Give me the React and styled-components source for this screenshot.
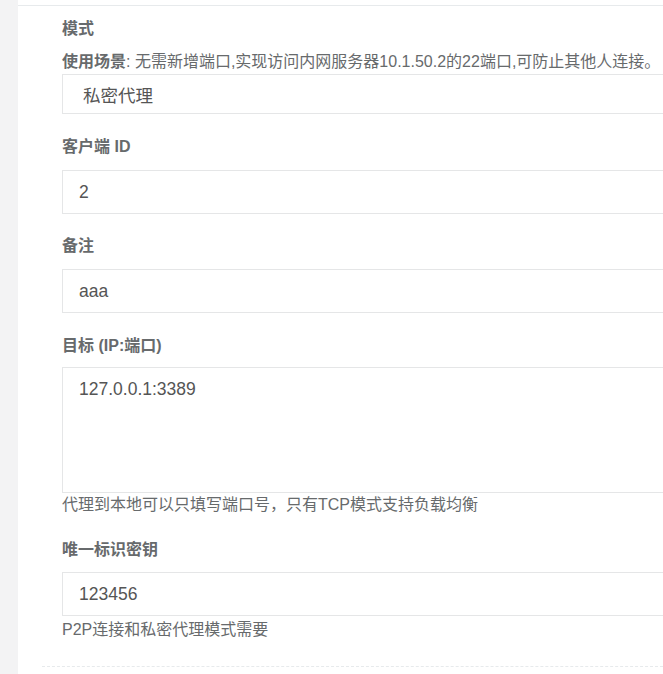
import styled, { createGlobalStyle } from 'styled-components';

const GlobalStyle = createGlobalStyle`
  *, *::before, *::after { box-sizing: border-box; margin: 0; padding: 0; }
  html, body { width: 100%; height: 100%; overflow: hidden; background: #fff; }
  body {
    font-family: 'Liberation Sans', Arial, 'Noto Sans CJK SC', sans-serif;
    color: #676a6c;
  }
`;

const Page = styled.div`
  display: flex;
  height: 674px;
  width: 100%;
`;

/* grey rail on the left */
const Rail = styled.div`
  flex: 0 0 18px;
  background: #f3f3f4;
`;

const Main = styled.div`
  flex: 1;
  padding-top: 5px;
  min-width: 0;
  overflow: hidden;
`;

const Panel = styled.div`
  border-top: 1px solid #e7eaec;
  padding: 13px 0 0 24px;
`;

const Form = styled.form`
  padding-left: 20px;
`;

const Group = styled.div`
  margin-bottom: ${p => p.$mb ?? 23}px;
`;

const Label = styled.label`
  display: block;
  font-size: 16px;
  line-height: 20px;
  font-weight: 700;
  color: #676a6c;
  margin-bottom: ${p => p.$mb ?? 13}px;
`;

const Usage = styled.p`
  font-size: 16px;
  line-height: 20px;
  color: #676a6c;
  white-space: nowrap;
  margin-bottom: 2px;

  b { font-weight: 700; }
`;

/* the field runs on past the right edge of the shot, so no right border */
const Field = styled.div`
  display: flex;
  align-items: ${p => (p.$multi ? 'flex-start' : 'center')};
  height: ${p => p.$h ?? 44}px;
  border: 1px solid #e5e6e7;
  border-right: 0;
  background: #fff;
  padding: ${p => (p.$multi ? '11px' : '0')} 0 0 ${p => p.$pad ?? 16}px;
  font-size: 17.5px;
  color: #555;
  white-space: nowrap;
`;

const Help = styled.p`
  font-size: 16px;
  line-height: 20px;
  color: #676a6c;
  margin-top: ${p => p.$mt ?? 2}px;
`;

const Dashed = styled.div`
  margin: 26px 0 0 -20px;
  border-top: 1px dashed #e7eaec;
  height: 1px;
`;

export default function App() {
  return (
    <>
      <GlobalStyle />
      <Page>
        <Rail />
        <Main>
          <Panel>
            <Form>
              <Group>
                <Label>模式</Label>
                <Usage><b>使用场景</b>: 无需新增端口,实现访问内网服务器10.1.50.2的22端口,可防止其他人连接。</Usage>
                <Field $h={40} $pad={20}>私密代理</Field>
              </Group>

              <Group $mb={22}>
                <Label>客户端 ID</Label>
                <Field>2</Field>
              </Group>

              <Group>
                <Label>备注</Label>
                <Field>aaa</Field>
              </Group>

              <Group $mb={25}>
                <Label $mb={11}>目标 (IP:端口)</Label>
                <Field $multi $h={126}>127.0.0.1:3389</Field>
                <Help>代理到本地可以只填写端口号，只有TCP模式支持负载均衡</Help>
              </Group>

              <Group $mb={0}>
                <Label $mb={12}>唯一标识密钥</Label>
                <Field>123456</Field>
                <Help $mt={4}>P2P连接和私密代理模式需要</Help>
              </Group>

              <Dashed />
            </Form>
          </Panel>
        </Main>
      </Page>
    </>
  );
}
